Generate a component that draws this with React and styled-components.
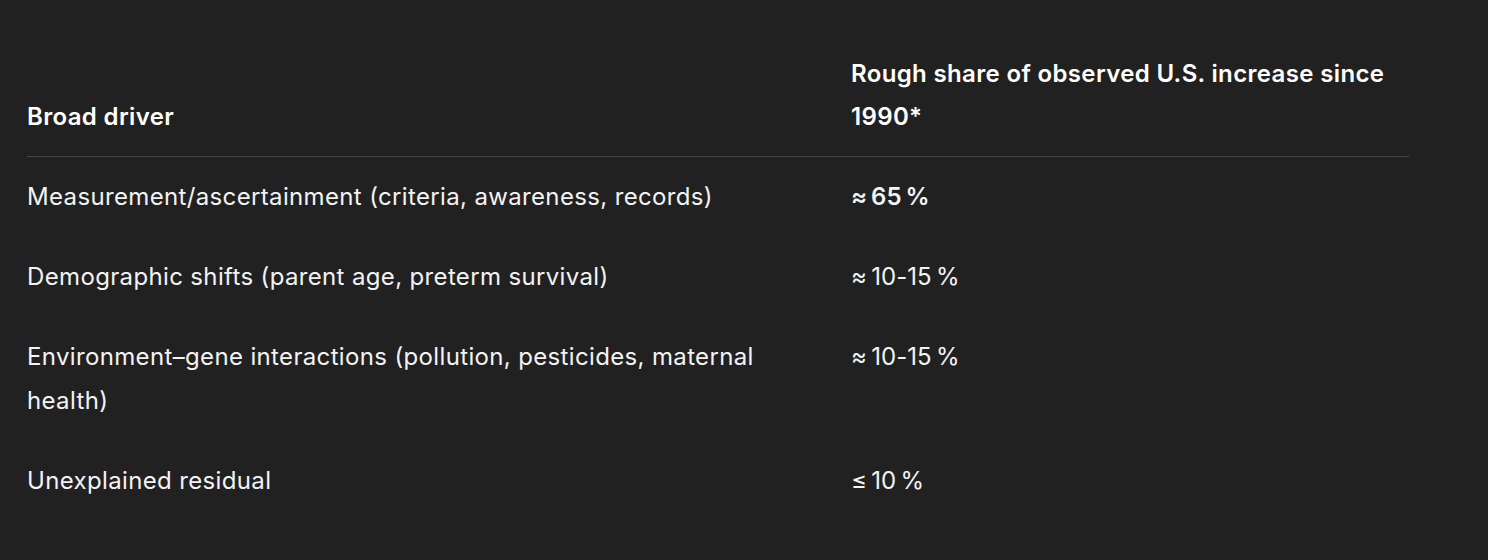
import styled, { createGlobalStyle } from "styled-components";

const GlobalStyle = createGlobalStyle`
  html, body {
    margin: 0;
    padding: 0;
    background: #212121;
  }
  body {
    font-family: Inter, "Noto Sans", "Liberation Sans", sans-serif;
    color: #f3f3f3;
    -webkit-font-smoothing: antialiased;
  }
`;

const Page = styled.div`
  width: 1488px;
  height: 560px;
  box-sizing: border-box;
  padding: 35px 79px 0 27px;
  background: #212121;
`;

const Table = styled.table`
  width: 100%;
  border-collapse: collapse;
  table-layout: fixed;
  font-size: 24px;
  line-height: 44px;
  letter-spacing: 0.35px;
`;

const HeadCell = styled.th`
  box-sizing: border-box;
  text-align: left;
  vertical-align: bottom;
  font-weight: 600;
  line-height: 43px;
  color: #ffffff;
  padding: 17px 24px 18px 0;
  border-bottom: 1px solid #464646;
  width: ${({ $width }) => $width || "auto"};
`;

const Cell = styled.td`
  vertical-align: top;
  padding: 18px 24px 18px 0;
  font-weight: ${({ $strong }) => ($strong ? 600 : 400)};
`;

const rows = [
	{ driver: "Measurement/ascertainment (criteria, awareness, records)", share: "≈\u202f65\u202f%", strong: true },
	{ driver: "Demographic shifts (parent age, preterm survival)", share: "≈\u202f10-15\u202f%" },
	{ driver: "Environment–gene interactions (pollution, pesticides, maternal health)", share: "≈\u202f10-15\u202f%" },
	{ driver: "Unexplained residual", share: "≤\u202f10\u202f%" },
];

const App = () => {
	return (
		<>
			<GlobalStyle/>
			<Page>
				<Table>
					<thead>
						<tr>
							<HeadCell $width="824px">Broad driver</HeadCell>
							<HeadCell>Rough share of observed U.S. increase since 1990*</HeadCell>
						</tr>
					</thead>
					<tbody>
						{rows.map((row) =>
							<tr key={row.driver}>
								<Cell>{row.driver}</Cell>
								<Cell $strong={row.strong}>{row.share}</Cell>
							</tr>)}
					</tbody>
				</Table>
			</Page>
		</>
	);
};

export default App;
